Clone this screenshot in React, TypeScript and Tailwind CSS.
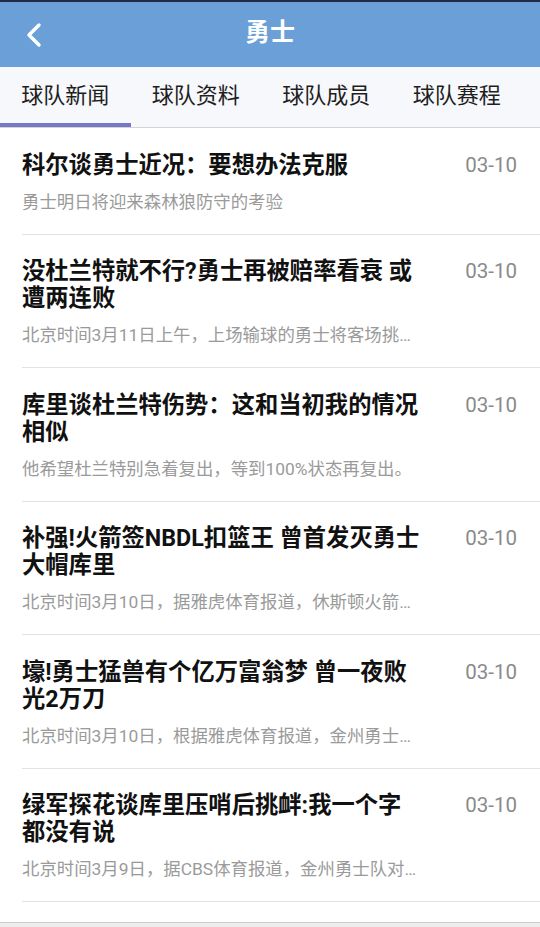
import React from "react";

const items = [
  {
    title: ["科尔谈勇士近况：要想办法克服"],
    sub: "勇士明日将迎来森林狼防守的考验",
  },
  {
    title: ["没杜兰特就不行?勇士再被赔率看衰 或", "遭两连败"],
    sub: "北京时间3月11日上午，上场输球的勇士将客场挑…",
  },
  {
    title: ["库里谈杜兰特伤势：这和当初我的情况", "相似"],
    sub: "他希望杜兰特别急着复出，等到100%状态再复出。",
  },
  {
    title: ["补强!火箭签NBDL扣篮王 曾首发灭勇士", "大帽库里"],
    sub: "北京时间3月10日，据雅虎体育报道，休斯顿火箭…",
  },
  {
    title: ["壕!勇士猛兽有个亿万富翁梦 曾一夜败", "光2万刀"],
    sub: "北京时间3月10日，根据雅虎体育报道，金州勇士…",
  },
  {
    title: ["绿军探花谈库里压哨后挑衅:我一个字", "都没有说"],
    sub: "北京时间3月9日，据CBS体育报道，金州勇士队对…",
  },
];

const tabs = ["球队新闻", "球队资料", "球队成员", "球队赛程"];

export default function App() {
  return (
    <div
      className="w-[540px] h-[927px] bg-white overflow-hidden flex flex-col"
      style={{ fontFamily: 'Roboto, "Noto Sans CJK SC", sans-serif' }}
    >
      <div className="h-[2px] bg-[#1f2b45] shrink-0" />
      <div className="h-[65px] bg-[#6a9fd8] grid grid-cols-[80px_1fr_80px] items-center shrink-0">
        <div className="pl-[24px] flex items-center">
          <svg width="20" height="26" viewBox="0 0 20 26">
            <polyline
              points="15,3 5,13 15,23"
              fill="none"
              stroke="white"
              strokeWidth="3.5"
              strokeLinecap="round"
              strokeLinejoin="round"
            />
          </svg>
        </div>
        <div className="text-center text-white text-[25px] font-bold leading-none pb-[4px]">
          勇士
        </div>
        <div />
      </div>
      <div className="h-[61px] bg-[#f6f8fb] flex border-b border-[#d4d4d4] shrink-0">
        {tabs.map((t, i) => (
          <div key={t} className="w-[130.5px] flex flex-col shrink-0">
            <div className="flex-1 flex items-center justify-center text-[22px] text-[#1e1e1e]">
              {t}
            </div>
            <div className={i === 0 ? "h-[4px] bg-[#7777c9]" : "h-[4px]"} />
          </div>
        ))}
      </div>
      <div className="pl-[22px]">
        {items.map((it, i) => (
          <div
            key={i}
            className="flex border-b border-[#e2e2e2] pt-[23.5px] pb-[20px] pr-[23px]"
          >
            <div className="flex-1 min-w-0">
              <div className="text-[23.3px] leading-[27px] font-bold text-[#111] whitespace-nowrap">
                {it.title.map((l, j) => (
                  <div key={j}>{l}</div>
                ))}
              </div>
              <div className="mt-[11px] text-[17.4px] leading-[24px] text-[#9a9a9a] whitespace-nowrap">
                {it.sub}
              </div>
            </div>
            <div className="text-[20.5px] leading-[27px] text-[#8a8a8a]">03-10</div>
          </div>
        ))}
      </div>
      <div className="flex-1" />
      <div className="h-[5px] border-t border-[#cdcdcd] bg-[#ededed] shrink-0" />
    </div>
  );
}
